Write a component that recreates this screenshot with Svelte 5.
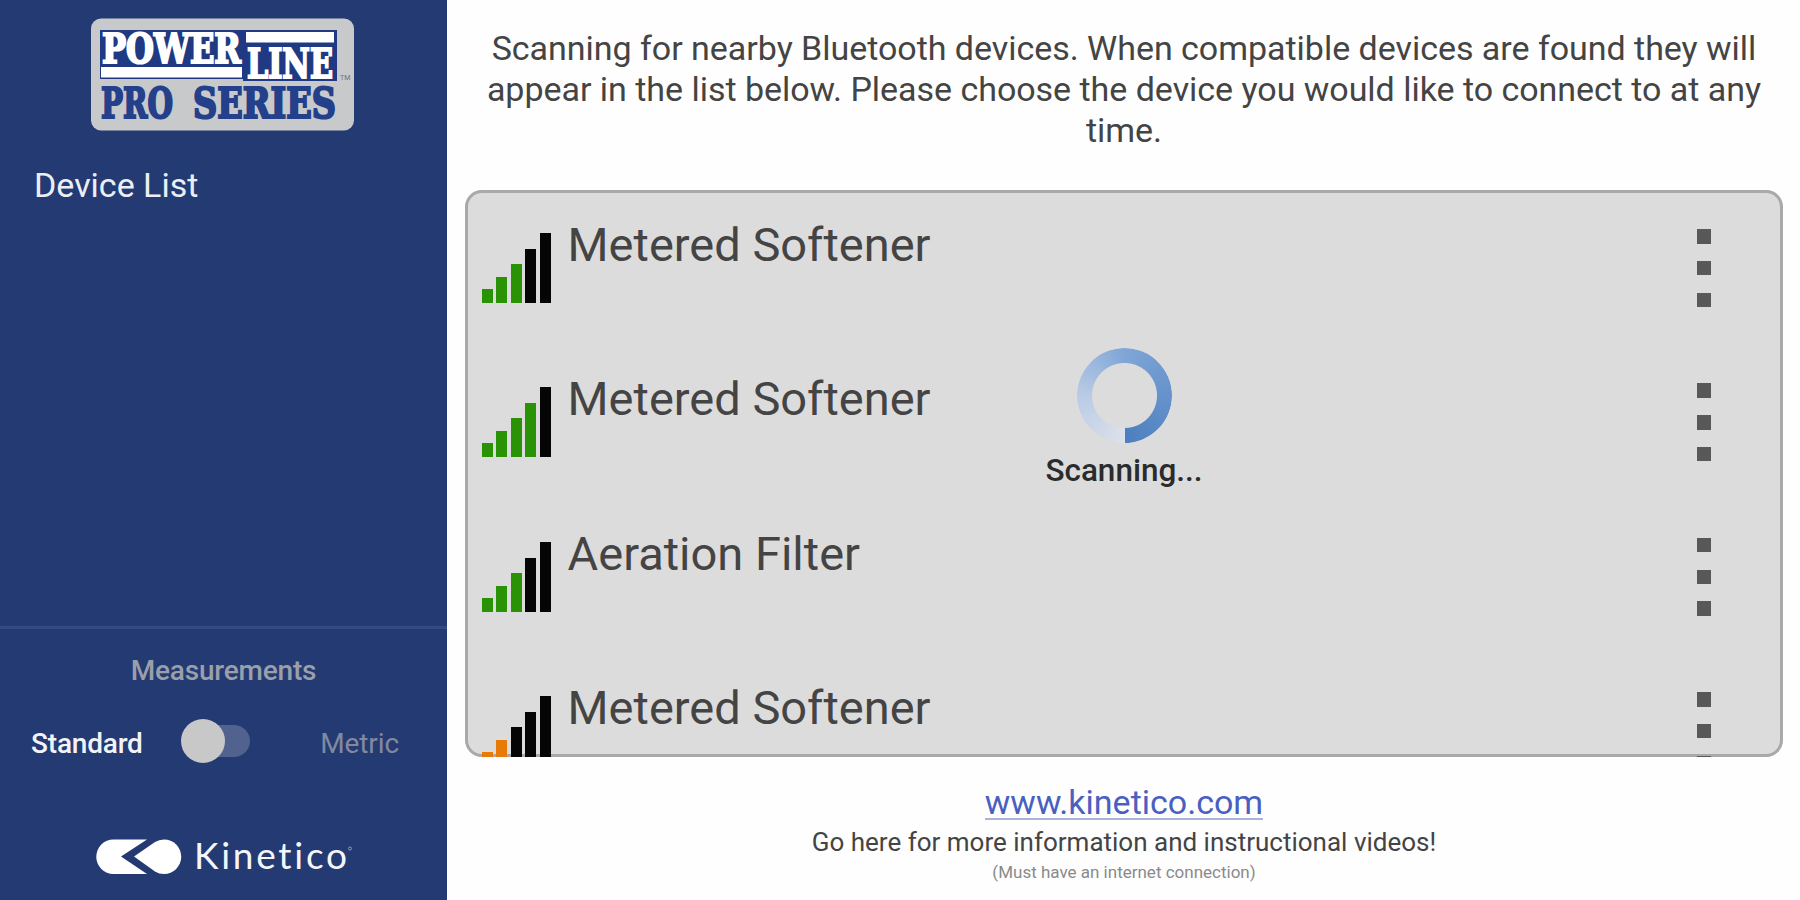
<script>
  const devices = [
    { name: 'Metered Softener', level: 3, color: '#2a9305' },
    { name: 'Metered Softener', level: 4, color: '#2a9305' },
    { name: 'Aeration Filter', level: 3, color: '#2a9305' },
    { name: 'Metered Softener', level: 2, color: '#e87a08' }
  ]

  const bars = [14, 26, 39, 54, 70]

  let metric = false

  const toggleUnits = () => (metric = !metric)
</script>

<div class="app">
  <aside>
    <svg class="brand" width="264" height="114" viewBox="92 18 264 114">
      <rect x="92" y="18.5" width="263" height="112" rx="10" fill="#c8c9ca" />
      <path d="M101 30H338V81H244V79H101Z" fill="#1f3a82" />
      <path d="M102 67H243V77.500H102ZM247 32H335V42.500H247Z" fill="#fff" />
      <g class="slab">
        <text x="103" y="63" font-size="41" textLength="139" lengthAdjust="spacingAndGlyphs" fill="#fff" stroke="#fff">POWER</text>
        <text x="248" y="78" font-size="41" textLength="86" lengthAdjust="spacingAndGlyphs" fill="#fff" stroke="#fff">LINE</text>
        <text x="102" y="118" font-size="42" textLength="72" lengthAdjust="spacingAndGlyphs" fill="#24408a" stroke="#24408a">PRO</text>
        <text x="194" y="118" font-size="42" textLength="143" lengthAdjust="spacingAndGlyphs" fill="#24408a" stroke="#24408a">SERIES</text>
      </g>
      <text x="341" y="80" font-size="7" fill="#66708f">TM</text>
    </svg>

    <nav>Device List</nav>

    <section>
      <h2>Measurements</h2>
      <div class="units">
        <span class="standard" class:dim={metric}>Standard</span>
        <button class="switch" class:on={metric} on:click={toggleUnits} aria-label="Units"></button>
        <span class="metric" class:dim={!metric}>Metric</span>
      </div>
      <svg class="kinetico" width="270" height="50" viewBox="90 830 270 50">
        <path
          d="M112.500 838.500H146L120 855.500L146 873H112.500A17.200 17.200 0 0 1 112.500 838.500Z"
          fill="#fff"
        />
        <path
          d="M133 855.500L154 841Q158 838.500 163 838.500A17.200 17.200 0 0 1 163 873Q158 873 154 870.500Z"
          fill="#fff"
        />
        <text x="193" y="868" font-size="37" textLength="153" fill="#f4f6fa">Kinetico</text>
        <circle cx="349" cy="847.500" r="1.500" fill="none" stroke="#8d9abf" stroke-width="1" />
      </svg>
    </section>
  </aside>

  <main>
    <p class="intro">
      Scanning for nearby Bluetooth devices. When compatible devices are found they will<br />
      appear in the list below. Please choose the device you would like to connect to at any<br />
      time.
    </p>

    <div class="list">
      {#each devices as device}
        <div class="row">
          <div class="signal">
            {#each bars as height, i}
              <i style="height: {height}px; background: {i < device.level ? device.color : '#050505'}"></i>
            {/each}
          </div>
          <span class="name">{device.name}</span>
          <div class="more"><b></b><b></b><b></b></div>
        </div>
      {/each}

      <div class="scanning">
        <div class="spinner"></div>
        <span>Scanning...</span>
      </div>
    </div>

    <footer>
      <a href="http://www.kinetico.com">www.kinetico.com</a>
      <p class="info">Go here for more information and instructional videos!</p>
      <p class="note">(Must have an internet connection)</p>
    </footer>
  </main>
</div>

<style>
  :global(body) {
    margin: 0;
  }
  .app {
    display: flex;
    width: 1800px;
    height: 900px;
    overflow: hidden;
    background: #fefefe;
    font-family: Roboto, sans-serif;
    color: #444;
  }
  aside {
    display: flex;
    flex-direction: column;
    box-sizing: border-box;
    width: 447px;
    padding-top: 18px;
    background: #243a73;
  }
  .brand {
    flex: none;
    margin-left: 91px;
  }
  .slab {
    font-family: 'DejaVu Serif', serif;
    font-weight: bold;
    stroke-width: 2.2px;
  }
  nav {
    margin: 33px 0 0 34px;
    font-size: 34px;
    line-height: 40px;
    color: #eceef5;
  }
  section {
    height: 274px;
    margin-top: auto;
    border-top: 3px solid #344a82;
    box-sizing: border-box;
  }
  h2 {
    margin: 24px 0 0;
    font-size: 28px;
    font-weight: 500;
    line-height: 36px;
    letter-spacing: -0.2px;
    text-align: center;
    color: #9b9fa9;
  }
  .units {
    display: flex;
    align-items: center;
    height: 50px;
    margin-top: 29px;
    padding: 0 48px 0 31px;
    font-size: 28px;
  }
  .standard {
    width: 112px;
    font-weight: 500;
    letter-spacing: -0.2px;
    color: #f2f3f6;
  }
  .metric {
    margin-left: auto;
    letter-spacing: -0.1px;
    color: #f2f3f6;
  }
  .units .dim {
    color: #8189a0;
  }
  .switch {
    position: relative;
    width: 66px;
    height: 32px;
    margin: -5px 0 0 41px;
    padding: 0;
    border: none;
    border-radius: 16px;
    background: #52628f;
  }
  .switch::before {
    content: '';
    position: absolute;
    top: -6px;
    left: -3px;
    width: 44px;
    height: 44px;
    border-radius: 50%;
    background: #c8c8c8;
  }
  .switch.on::before {
    left: 24px;
  }
  .kinetico {
    display: block;
    margin: 63px 0 0 91px;
    font-family: Lato, sans-serif;
    font-variant-ligatures: none;
  }
  main {
    flex: 1;
    display: flex;
    flex-direction: column;
    padding: 28px 17px 0 18px;
  }
  .intro {
    margin: 0 0 39px;
    height: 123px;
    font-size: 34px;
    line-height: 41px;
    letter-spacing: -0.03px;
    text-align: center;
    white-space: nowrap;
  }
  .list {
    position: relative;
    box-sizing: border-box;
    height: 567px;
    overflow: hidden;
    padding: 3px;
    border-radius: 17px;
    background: #dcdcdc;
    box-shadow: inset 0 0 0 3px #a9a9a9;
  }
  .row {
    display: flex;
    box-sizing: border-box;
    height: 154.400px;
    padding: 32px 69px 0 14px;
  }
  .signal {
    display: flex;
    align-items: flex-end;
    gap: 3.400px;
    height: 78px;
  }
  .signal i {
    width: 11px;
  }
  .name {
    margin: -8px 0 0 17px;
    font-size: 47px;
    line-height: 56px;
  }
  .more {
    display: flex;
    flex-direction: column;
    gap: 17.300px;
    margin: 4px 0 0 auto;
  }
  .more b {
    width: 14.500px;
    height: 14.500px;
    background: #585858;
  }
  /* sits over the rows while a scan is running */
  .scanning {
    position: absolute;
    top: 158px;
    left: 0;
    right: 0;
    display: flex;
    flex-direction: column;
    align-items: center;
    font-size: 31.500px;
    font-weight: 500;
    line-height: 38px;
    color: #2b2b2b;
  }
  .spinner {
    width: 95px;
    height: 95px;
    border-radius: 50%;
    background: conic-gradient(#7fa6d6, #4c7fc0 50%, #dde1ea 50%, #b9cbe6 75%, #7fa6d6);
    mask: radial-gradient(circle, transparent 32px, #000 33px);
  }
  .scanning span {
    margin-top: 9px;
  }
  footer {
    display: flex;
    flex-direction: column;
    align-items: center;
  }
  a {
    margin-top: 25px;
    font-size: 34px;
    line-height: 40px;
    color: #4a60c0;
    text-decoration: none;
    border-bottom: 2px solid #a9b3de;
    height: 36px;
  }
  .info {
    margin: 6px 0 0;
    font-size: 26px;
    line-height: 32px;
  }
  .note {
    margin: 4px 0 0;
    font-size: 17px;
    line-height: 20px;
    color: #8a8a8a;
  }
</style>
